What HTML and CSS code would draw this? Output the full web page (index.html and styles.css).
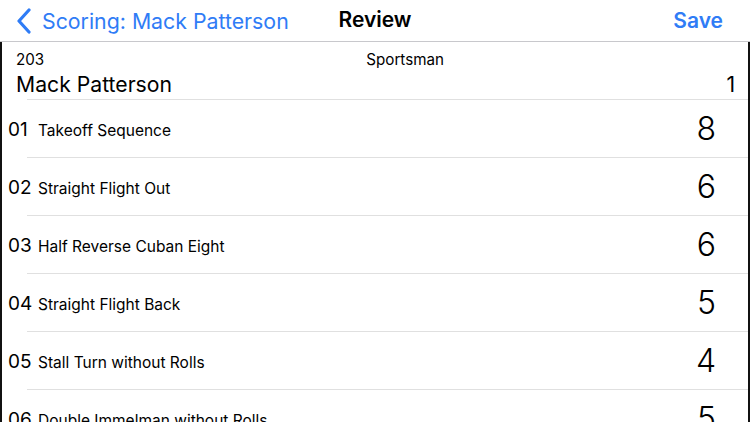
FILE: index.html
```html
<!DOCTYPE html>
<html>
<head>
<meta charset="utf-8">
<link rel="stylesheet" href="styles.css">
</head>
<body>
<div class="nav">
  <div class="nav-left">
    <svg class="chev" width="16" height="26" viewBox="0 0 16 26"><path d="M13 2 L3 13 L13 24" fill="none" stroke="#2f7cf6" stroke-width="3.2" stroke-linecap="round" stroke-linejoin="round"/></svg>
    <span class="back">Scoring: Mack Patterson</span>
  </div>
  <div class="nav-title">Review</div>
  <div class="nav-right">Save</div>
</div>
<div class="content">
  <div class="header">
    <div class="hrow1"><span class="num">203</span><span class="cls">Sportsman</span></div>
    <div class="hrow2"><span class="pilot">Mack Patterson</span><span class="round">1</span></div>
  </div>
  <div class="row"><span class="idx">01</span><span class="name">Takeoff Sequence</span><span class="score">8</span></div>
  <div class="row"><span class="idx">02</span><span class="name">Straight Flight Out</span><span class="score">6</span></div>
  <div class="row"><span class="idx">03</span><span class="name">Half Reverse Cuban Eight</span><span class="score">6</span></div>
  <div class="row"><span class="idx">04</span><span class="name">Straight Flight Back</span><span class="score">5</span></div>
  <div class="row"><span class="idx">05</span><span class="name">Stall Turn without Rolls</span><span class="score">4</span></div>
  <div class="row"><span class="idx">06</span><span class="name">Double Immelman without Rolls</span><span class="score">5</span></div>
</div>
</body>
</html>
```
FILE: styles.css
```css
html, body {
  margin: 0;
  padding: 0;
  background: #fff;
  width: 750px;
  height: 422px;
  overflow: hidden;
  font-family: Inter, "Liberation Sans", Arial, sans-serif;
  color: #000;
}
.nav {
  height: 42px;
  border-bottom: 1px solid #c8c8cc;
  display: flex;
  align-items: center;
  position: relative;
  box-sizing: border-box;
}
.nav-left {
  display: flex;
  align-items: center;
  padding-left: 16px;
  color: #2f7cf6;
  font-size: 21.3px;
}
.chev { margin-right: 10px; }
.nav-title {
  position: absolute;
  left: 0;
  right: 0;
  text-align: center;
  font-size: 21px;
  font-weight: 600;
  pointer-events: none;
  top: 7px;
}
.nav-right {
  margin-left: auto;
  padding-right: 27px;
  color: #2f7cf6;
  font-size: 21px;
  font-weight: 600;
}
.content {
  border-left: 2px solid #111;
  border-right: 2px solid #111;
  height: 380px;
  box-sizing: border-box;
  overflow: hidden;
}
.header {
  height: 58px;
  padding-left: 14px;
  padding-right: 13px;
  box-sizing: border-box;
  position: relative;
}
.header::after {
  content: "";
  position: absolute;
  left: 25px;
  right: 0;
  bottom: 0;
  border-bottom: 1px solid #e0e0e0;
}
.hrow1 {
  display: flex;
  font-size: 15.2px;
  padding-top: 8px;
  height: 18px;
}
.hrow1 .cls { margin-left: 322px; }
.hrow2 {
  display: flex;
  justify-content: space-between;
  font-size: 21.2px;
  padding-top: 3px;
}
.row {
  height: 58px;
  display: flex;
  align-items: center;
  padding-left: 6px;
  padding-right: 32px;
  box-sizing: border-box;
  position: relative;
}
.row::after {
  content: "";
  position: absolute;
  left: 25px;
  right: 0;
  bottom: 0;
  border-bottom: 1px solid #e0e0e0;
}
.idx { font-size: 19px; width: 30px; margin-top: 0px; }
.name { font-size: 15.5px; flex: 1; margin-top: 3px; }
.score { font-size: 32px; margin-top: -2px; font-weight: 300; }
```
